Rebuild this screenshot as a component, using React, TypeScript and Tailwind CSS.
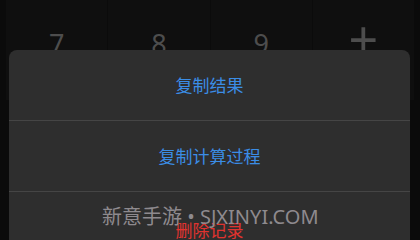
import React from "react";

export default function App() {
  const keys = ["7", "8", "9", "+"];
  return (
    <div
      className="relative w-[420px] h-[240px] overflow-hidden bg-[#0b0b0b]"
      style={{ fontFamily: '"Noto Sans", "Noto Sans CJK SC", sans-serif' }}
    >
      <div className="grid grid-cols-4 gap-px px-[6px] h-[100px] bg-[#0b0b0b]">
        {keys.map((k) => (
          <div key={k} className="flex justify-center bg-[#0f0f0f] pt-[26px]">
            {k === "+" ? (
              <span className="text-[52px] leading-[52px] font-normal text-[#4d4d4d] mt-[-13px]">+</span>
            ) : (
              <span className="text-[27px] leading-[36px] text-[#4d4d4d]">{k}</span>
            )}
          </div>
        ))}
      </div>
      <div className="absolute left-[9px] top-[50px] w-[401px] h-[240px] rounded-[8px] bg-[#2e2e2e] flex flex-col">
        <div className="h-[71px] flex items-center justify-center border-b border-[#454545] pt-[2px]">
          <span className="text-[17px] text-[#3b8de6]">复制结果</span>
        </div>
        <div className="h-[71px] flex items-center justify-center border-b border-[#454545] pt-[2px]">
          <span className="text-[17px] text-[#3b8de6]">复制计算过程</span>
        </div>
        <div className="h-[71px] flex items-center justify-center pt-[6px]">
          <span className="text-[17px] text-[#e0332f]">删除记录</span>
        </div>
      </div>
      <div className="absolute left-[102px] top-[203px] text-[20px] leading-[28px] text-[#8e8a8e] whitespace-nowrap">
        新意手游 • SJXINYI.COM
      </div>
    </div>
  );
}
